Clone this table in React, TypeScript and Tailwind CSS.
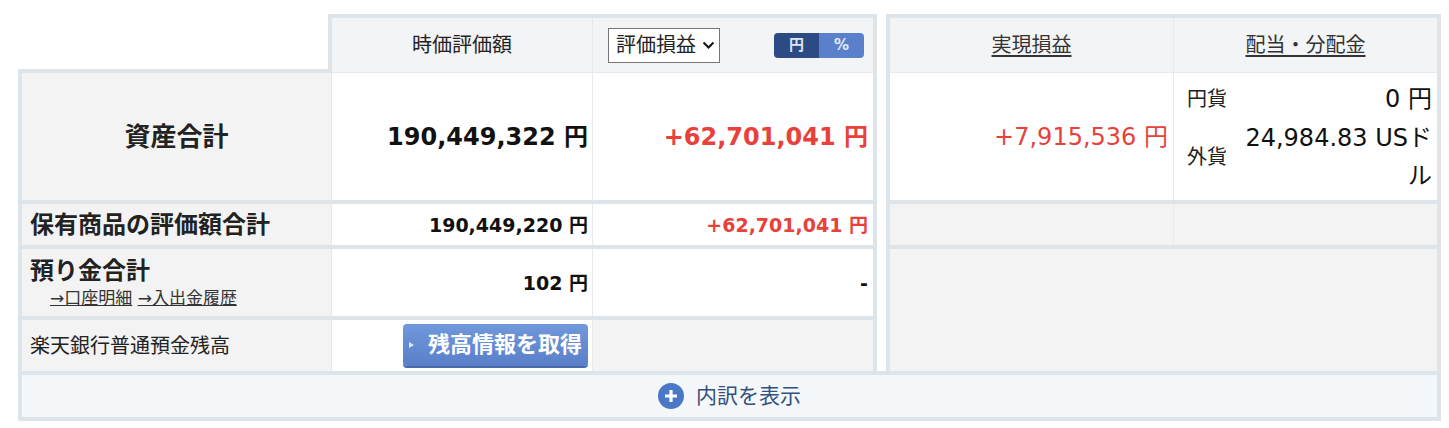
import React from 'react'

const edge = 'border-[#dde5ea]'
const line = 'border-[#e6eaee]'

const Chevron = () => (
    <svg width="13" height="8" viewBox="0 0 13 8" className="ml-[6px]">
        <polyline points="1.5,1.5 6.5,6.5 11.5,1.5" fill="none" stroke="#111" strokeWidth="2" />
    </svg>
)

const PlusCircle = () => (
    <svg width="26" height="26" viewBox="0 0 26 26">
        <circle cx="13" cy="13" r="13" fill="#4a78c6" />
        <path d="M13 7v12M7 13h12" stroke="#fff" strokeWidth="3.2" strokeLinecap="butt" />
    </svg>
)

const App = () => {
    return (
        <div className="min-h-screen bg-white font-['DejaVu_Sans','Noto_Sans_CJK_JP',sans-serif] text-[#222]">
            <div className="pl-[18px] pt-[14px] w-[1441px]">
                <div className="flex gap-[9px]">
                    {/* Left table */}
                    <div className="w-[859px] flex flex-col">
                        <div className="flex h-[59px]">
                            <div className={`w-[310px] border-b-4 ${edge}`} />
                            <div className={`flex-1 flex bg-[#f3f4f5] border-t-4 border-x-4 ${edge}`}>
                                <div className={`w-[261px] border-r border-b ${line} flex items-center justify-center text-[20px] leading-[28px]`}>
                                    時価評価額
                                </div>
                                <div className={`flex-1 border-b ${line} flex items-center justify-between pl-[15px] pr-[9px]`}>
                                    <div className="h-[35px] w-[112px] bg-white border border-[#767676] flex items-center pl-[7px] text-[20px] leading-[28px]">
                                        評価損益
                                        <Chevron />
                                    </div>
                                    <div className="flex h-[25px] rounded-[4px] overflow-hidden text-[15px] font-bold leading-[25px]">
                                        <span className="w-[45px] text-center bg-[#2c4a84] text-[#dfe6f3]">円</span>
                                        <span className="w-[45px] text-center bg-[#5b80cb] text-[#e2eafa]">%</span>
                                    </div>
                                </div>
                            </div>
                        </div>

                        <div className={`border-x-4 ${edge} flex flex-col`}>
                            {/* 資産合計 */}
                            <div className="flex h-[127px]">
                                <div className={`w-[310px] bg-[#f3f3f3] border-r ${line} flex items-center justify-center text-[26px] font-bold leading-[34px]`}>
                                    資産合計
                                </div>
                                <div className={`w-[261px] bg-white border-r ${line} flex items-center justify-end pr-[4px] text-[24px] font-bold leading-[32px] text-[#111]`}>
                                    190,449,322 円
                                </div>
                                <div className="flex-1 bg-white flex items-center justify-end pr-[5px] text-[24px] font-bold leading-[32px] text-[#e8413c]">
                                    +62,701,041 円
                                </div>
                            </div>

                            {/* 保有商品の評価額合計 */}
                            <div className={`flex h-[45px] border-t-4 ${edge}`}>
                                <div className={`w-[310px] bg-[#f3f3f3] border-r ${line} flex items-center pl-[8px] text-[24px] font-bold leading-[30px]`}>
                                    保有商品の評価額合計
                                </div>
                                <div className={`w-[261px] bg-white border-r ${line} flex items-center justify-end pr-[4px] text-[19px] font-bold leading-[26px] text-[#111]`}>
                                    190,449,220 円
                                </div>
                                <div className="flex-1 bg-white flex items-center justify-end pr-[5px] text-[19px] font-bold leading-[26px] text-[#e8413c]">
                                    +62,701,041 円
                                </div>
                            </div>

                            {/* 預り金合計 */}
                            <div className={`flex h-[71px] border-t-4 ${edge}`}>
                                <div className={`w-[310px] bg-[#f3f3f3] border-r ${line} flex flex-col justify-center pl-[8px]`}>
                                    <span className="text-[24px] font-bold leading-[30px]">預り金合計</span>
                                    <span className="pl-[20px] text-[17px] leading-[24px] text-[#333]">
                                        <a href="#" className="underline">→口座明細</a>{' '}
                                        <a href="#" className="underline">→入出金履歴</a>
                                    </span>
                                </div>
                                <div className={`w-[261px] bg-white border-r ${line} flex items-center justify-end pr-[4px] text-[19px] font-bold leading-[26px] text-[#111]`}>
                                    102 円
                                </div>
                                <div className="flex-1 bg-white flex items-center justify-end pr-[5px] text-[19px] font-bold leading-[26px] text-[#111]">
                                    -
                                </div>
                            </div>

                            {/* 楽天銀行普通預金残高 */}
                            <div className={`flex h-[55px] border-t-4 ${edge}`}>
                                <div className={`w-[310px] bg-[#f3f3f3] border-r ${line} flex items-center pl-[8px] text-[20px] leading-[28px]`}>
                                    楽天銀行普通預金残高
                                </div>
                                <div className={`w-[261px] bg-white border-r ${line} flex items-center justify-end pr-[4px]`}>
                                    <div className="h-[42px] w-[185px] mb-[2px] rounded-[4px] bg-gradient-to-b from-[#7098da] to-[#5a7fca] shadow-[0_2px_0_#4868a8] flex items-center pl-[6px] whitespace-nowrap text-white text-[22px] font-bold leading-[30px] cursor-pointer">
                                        <svg width="5" height="6" viewBox="0 0 5 6" className="mr-[14px] shrink-0">
                                            <polygon points="0,0 5,3 0,6" fill="#dfe8f7" />
                                        </svg>
                                        残高情報を取得
                                    </div>
                                </div>
                                <div className="flex-1 bg-[#f3f3f3]" />
                            </div>
                        </div>
                    </div>

                    {/* Right table */}
                    <div className={`w-[555px] flex flex-col border-x-4 ${edge}`}>
                        <div className={`flex h-[59px] bg-[#f3f4f5] border-t-4 ${edge}`}>
                            <div className={`w-[284px] border-r border-b ${line} flex items-center justify-center text-[20px] leading-[28px] text-[#333]`}>
                                <a href="#" className="underline underline-offset-[3px]">実現損益</a>
                            </div>
                            <div className={`flex-1 border-b ${line} flex items-center justify-center text-[20px] leading-[28px] text-[#333]`}>
                                <a href="#" className="underline underline-offset-[3px]">配当・分配金</a>
                            </div>
                        </div>

                        <div className="flex h-[127px]">
                            <div className={`w-[284px] bg-white border-r ${line} flex items-center justify-end pr-[5px] text-[24px] leading-[32px] text-[#e8413c]`}>
                                +7,915,536 円
                            </div>
                            <div className="flex-1 bg-white pl-[13px] pr-[5px] flex flex-col justify-center">
                                <div className="flex items-center h-[40px]">
                                    <span className="w-[52px] text-[20px] leading-[28px]">円貨</span>
                                    <span className="flex-1 text-right text-[24px] leading-[38px] text-[#111]">0 円</span>
                                </div>
                                <div className="flex items-center">
                                    <span className="w-[52px] text-[20px] leading-[28px]">外貨</span>
                                    <span className="flex-1 text-right text-[24px] leading-[38px] text-[#111]">24,984.83 USドル</span>
                                </div>
                            </div>
                        </div>

                        <div className={`flex h-[45px] border-t-4 ${edge}`}>
                            <div className={`w-[284px] bg-[#f3f3f3] border-r ${line}`} />
                            <div className="flex-1 bg-[#f3f3f3]" />
                        </div>

                        <div className={`flex-1 bg-[#f3f3f3] border-t-4 ${edge}`} />
                    </div>
                </div>

                {/* Footer */}
                <div className={`h-[50px] border-4 ${edge} bg-[#f4f8fa] flex items-center justify-center gap-[12px]`}>
                    <PlusCircle />
                    <span className="text-[21px] leading-[28px] text-[#34507e]">内訳を表示</span>
                </div>
            </div>
        </div>
    )
}

export default App
